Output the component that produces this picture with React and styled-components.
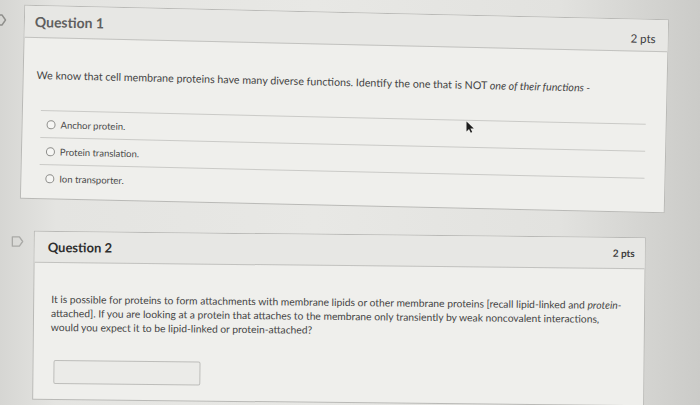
import React from "react";
import styled, { createGlobalStyle } from "styled-components";

const GlobalStyle = createGlobalStyle`
  html, body {
    margin: 0;
    padding: 0;
  }
  body {
    width: 700px;
    height: 405px;
    overflow: hidden;
    font-family: Lato, "Liberation Sans", sans-serif;
    background: linear-gradient(90deg, #d6d6d3 0%, #e4e4e1 8%, #e8e8e5 45%, #e2e2df 80%, #cbcbc8 100%);
  }
`;

const Page = styled.div`
  position: relative;
  width: 700px;
  height: 405px;
  display: flex;
  flex-direction: column;
`;

const Row = styled.div`
  display: flex;
  align-items: flex-start;
  margin-top: ${(p) => p.$top}px;
`;

const FlagCol = styled.div`
  width: ${(p) => p.$width}px;
  flex-shrink: 0;
  display: flex;
  padding-left: ${(p) => p.$left}px;
  box-sizing: border-box;
  color: ${(p) => p.$color};
`;

const Card = styled.div`
  width: ${(p) => p.$width}px;
  border: 1px solid #b9b9b6;
  background: #efefec;
  box-sizing: border-box;
  transform: rotate(${(p) => p.$tilt}deg);
  transform-origin: center center;
`;

const Header = styled.div`
  height: ${(p) => p.$height}px;
  display: flex;
  align-items: center;
  justify-content: space-between;
  padding: 0 ${(p) => p.$right}px 0 ${(p) => p.$left}px;
  background: #e7e7e4;
  border-bottom: 1px solid #c2c2bf;
`;

const Title = styled.h2`
  margin: 0;
  font-size: ${(p) => p.$size}px;
  font-weight: 700;
  color: ${(p) => p.$color};
`;

const Points = styled.span`
  font-size: ${(p) => p.$size}px;
  font-weight: ${(p) => p.$weight};
  color: #3d3d3d;
  padding-top: ${(p) => p.$drop}px;
`;

const Body = styled.div`
  padding: ${(p) => p.$pad};
`;

const Prompt = styled.p`
  margin: 0;
  font-size: ${(p) => p.$size}px;
  line-height: 14px;
  color: #454545;
  white-space: nowrap;
`;

const Answers = styled.ul`
  list-style: none;
  margin: 28px 7px 0 5px;
  padding: 0;
`;

const Answer = styled.li`
  height: 26px;
  display: flex;
  align-items: center;
  gap: 5px;
  padding-left: 6px;
  border-top: 1px solid #cacac7;
  font-size: 9.5px;
  color: #4a4a4a;
`;

const Radio = styled.span`
  width: 7px;
  height: 7px;
  border-radius: 50%;
  border: 1px solid #8d8d8a;
  background: #f6f6f4;
`;

const AnswerBox = styled.div`
  width: 147px;
  height: 24px;
  margin: 26px 0 0 3px;
  border: 1px solid #bdbdba;
  border-radius: 2px;
  background: #ebebe8;
  box-sizing: border-box;
`;

const Pointer = styled.svg`
  position: absolute;
  left: 466px;
  top: 121px;
`;

const Flag = ({ size }) => (
  <svg width={size} height={size} viewBox="0 0 16 16" fill="none">
    <path
      d="M2.5 3h7.5l3.5 5-3.5 5H2.5z"
      stroke="currentColor"
      strokeWidth="1.4"
      strokeLinejoin="round"
    />
  </svg>
);

const App = () => {
  return (
    <Page>
      <GlobalStyle />
      <Row $top={12}>
        <FlagCol $width={22} $left={0} $color="#8f8f8c">
          <span style={{ marginLeft: -8 }}>
            <Flag size={16} />
          </span>
        </FlagCol>
        <Card $width={645} $tilt={1.3}>
          <Header $height={31} $left={10} $right={12}>
            <Title $size={14} $color="#5f5f5f">
              Question 1
            </Title>
            <Points $size={11.5} $weight={400} $drop={6}>
              2 pts
            </Points>
          </Header>
          <Body $pad="30px 13px 7px 13px">
            <Prompt $size={10.7}>
              We know that cell membrane proteins have many diverse functions. Identify the one that is NOT{" "}
              <i>one of their functions -</i>
            </Prompt>
            <Answers>
              <Answer>
                <Radio />
                Anchor protein.
              </Answer>
              <Answer>
                <Radio />
                Protein translation.
              </Answer>
              <Answer>
                <Radio />
                Ion transporter.
              </Answer>
            </Answers>
          </Body>
        </Card>
      </Row>
      <Row $top={28}>
        <FlagCol $width={33} $left={10} $color="#a9a9a6">
          <Flag size={15} />
        </FlagCol>
        <Card $width={612} $tilt={0.6}>
          <Header $height={30} $left={13} $right={10}>
            <Title $size={13} $color="#2e2e2e">
              Question 2
            </Title>
            <Points $size={10} $weight={700} $drop={0}>
              2 pts
            </Points>
          </Header>
          <Body $pad="29px 17px 15px 17px">
            <Prompt $size={10.3}>
              It is possible for proteins to form attachments with membrane lipids or other membrane proteins
              [recall lipid-linked and <i>protein-</i>
              <br />
              attached]. If you are looking at a protein that attaches to the membrane only transiently by weak
              noncovalent interactions,
              <br />
              would you expect it to be lipid-linked or protein-attached?
            </Prompt>
            <AnswerBox />
          </Body>
        </Card>
      </Row>
      <Pointer width="8" height="12" viewBox="0 0 8 12">
        <path d="M0.5 0.5v10l2.5-2.4 1.8 3.6 1.4-0.7-1.8-3.5h3.4z" fill="#1d1d1d" />
      </Pointer>
    </Page>
  );
};

export default App;
